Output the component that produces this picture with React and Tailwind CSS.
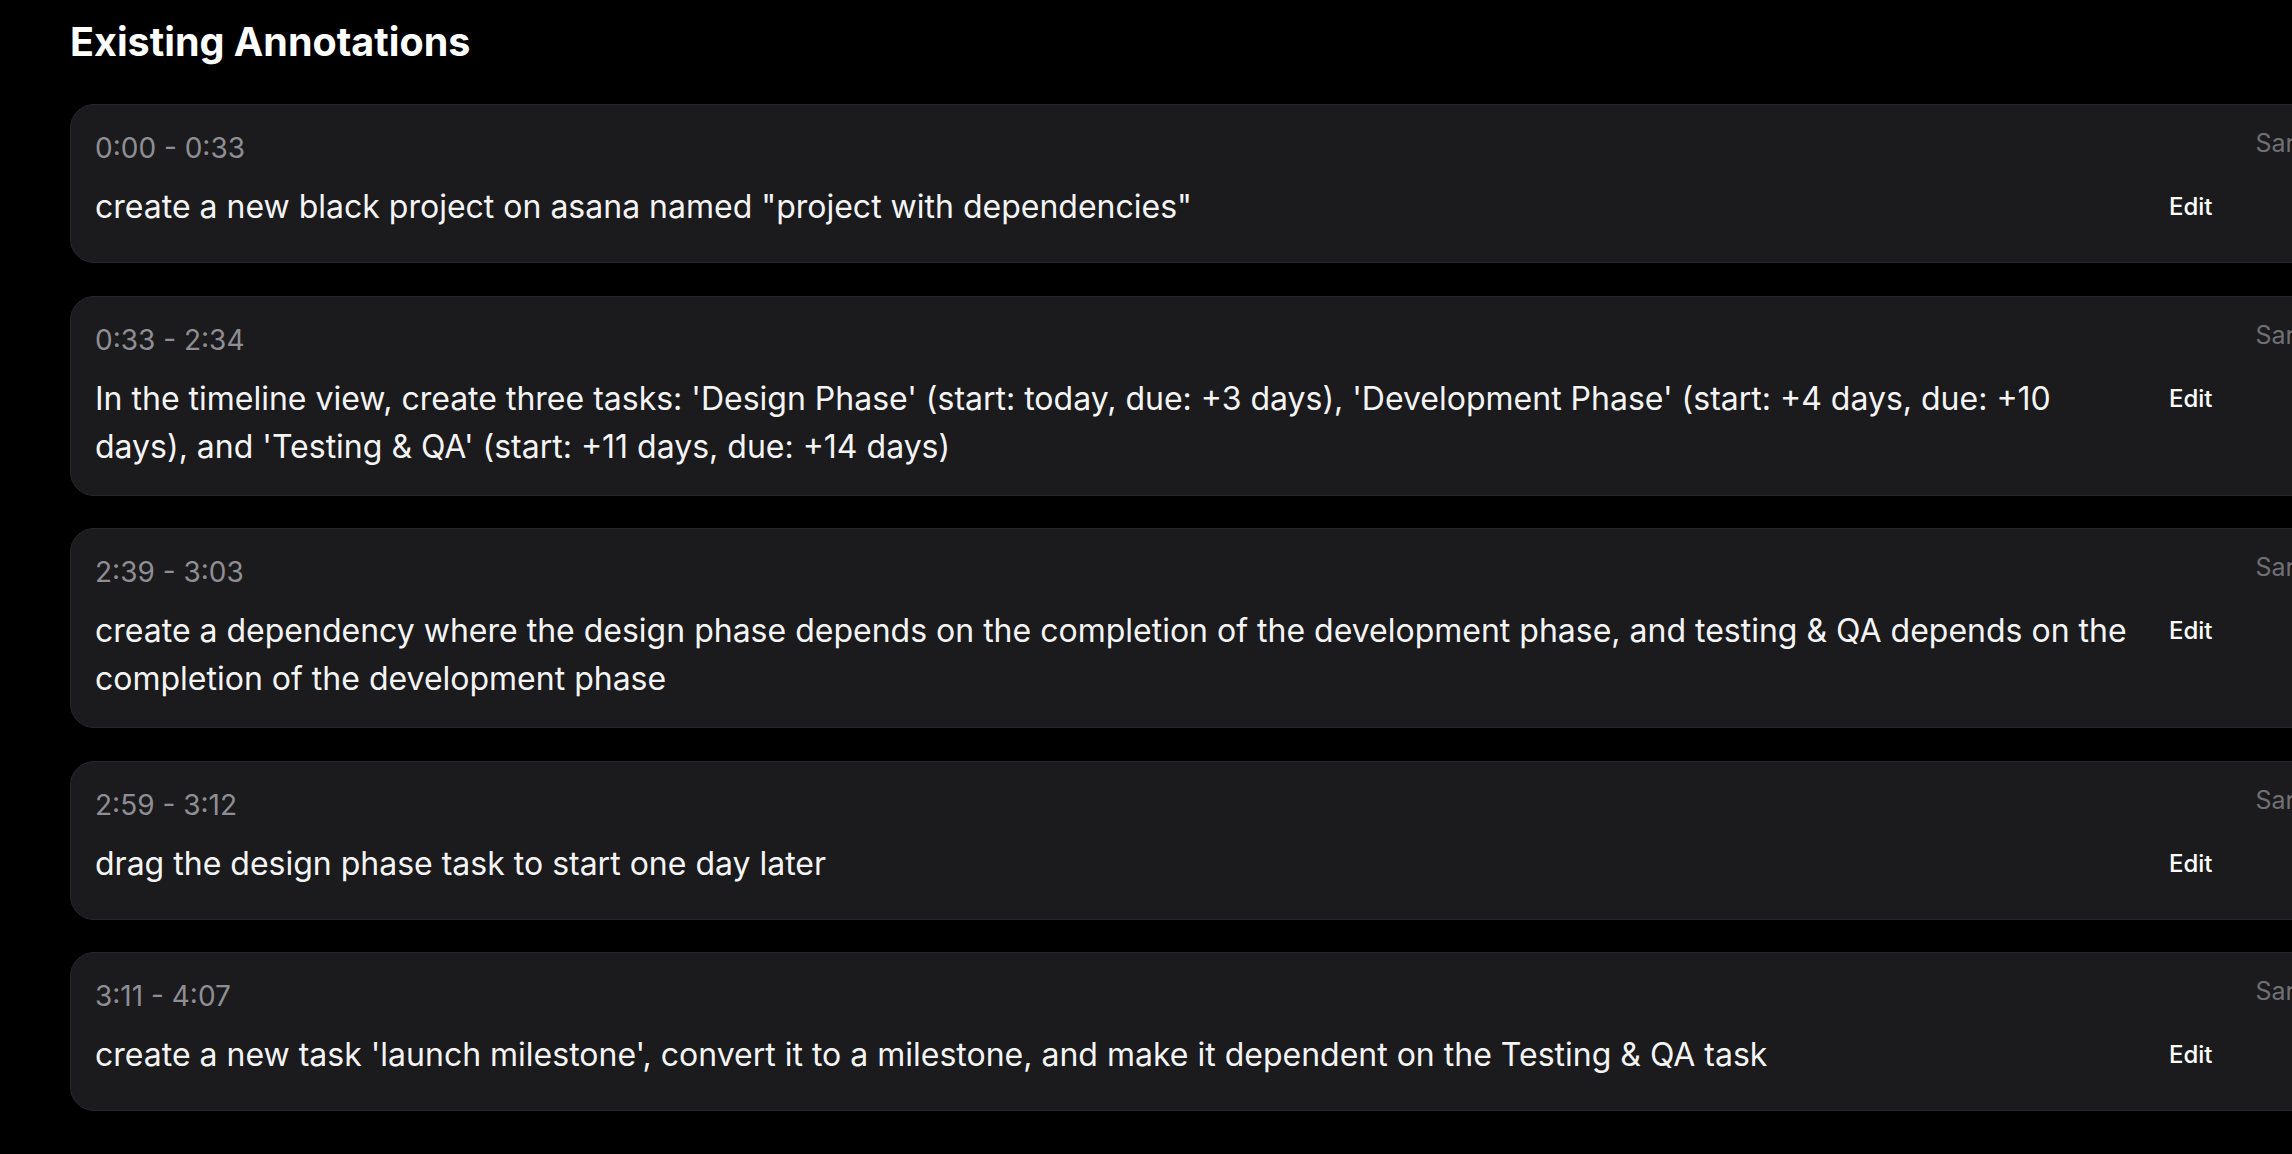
import React from "react"

const annotations = [
  {
    id: 1,
    start: "0:00",
    end: "0:33",
    text: 'create a new black project on asana named "project with dependencies"',
    author: "Sarah Mitchell",
  },
  {
    id: 2,
    start: "0:33",
    end: "2:34",
    text: "In the timeline view, create three tasks: 'Design Phase' (start: today, due: +3 days), 'Development Phase' (start: +4 days, due: +10 days), and 'Testing & QA' (start: +11 days, due: +14 days)",
    author: "Sarah Mitchell",
  },
  {
    id: 3,
    start: "2:39",
    end: "3:03",
    text: "create a dependency where the design phase depends on the completion of the development phase, and testing & QA depends on the completion of the development phase",
    author: "Sarah Mitchell",
  },
  {
    id: 4,
    start: "2:59",
    end: "3:12",
    text: "drag the design phase task to start one day later",
    author: "Sarah Mitchell",
  },
  {
    id: 5,
    start: "3:11",
    end: "4:07",
    text: "create a new task 'launch milestone', convert it to a milestone, and make it dependent on the Testing & QA task",
    author: "Sarah Mitchell",
  },
]

const AnnotationCard = ({ annotation }) => {
  return (
    <div className="flex w-max min-h-[159px] rounded-[24px] border border-[#28282b] bg-[#1b1b1d] pl-6 pr-6 pt-[25px] pb-6">
      <div className="w-[2050px]">
        <div className="text-[28px] leading-[36px] text-[#8e8e94]">
          {annotation.start} - {annotation.end}
        </div>
        <p className="mt-[17px] text-[32px] leading-[48px] text-[#f4f4f5]">{annotation.text}</p>
      </div>

      <div className="ml-6 mt-[61px]">
        <button className="text-[24px] leading-[32px] font-medium text-white">Edit</button>
      </div>

      <div className="ml-[43px] -mt-[3px]">
        <span className="text-[25px] leading-[32px] text-[#6f6f75] whitespace-nowrap">
          {annotation.author}
        </span>
      </div>
    </div>
  )
}

export default function App() {
  return (
    <div
      className="w-[2292px] h-[1154px] overflow-hidden bg-black pl-[70px] pt-[18px]"
      style={{ fontFamily: "Inter, 'Noto Sans', sans-serif" }}
    >
      <h2 className="text-[39.5px] leading-[48px] font-bold text-white">Existing Annotations</h2>

      <div className="mt-[38px] flex flex-col gap-[32.5px]">
        {annotations.map((annotation) => (
          <AnnotationCard key={annotation.id} annotation={annotation} />
        ))}
      </div>
    </div>
  )
}
